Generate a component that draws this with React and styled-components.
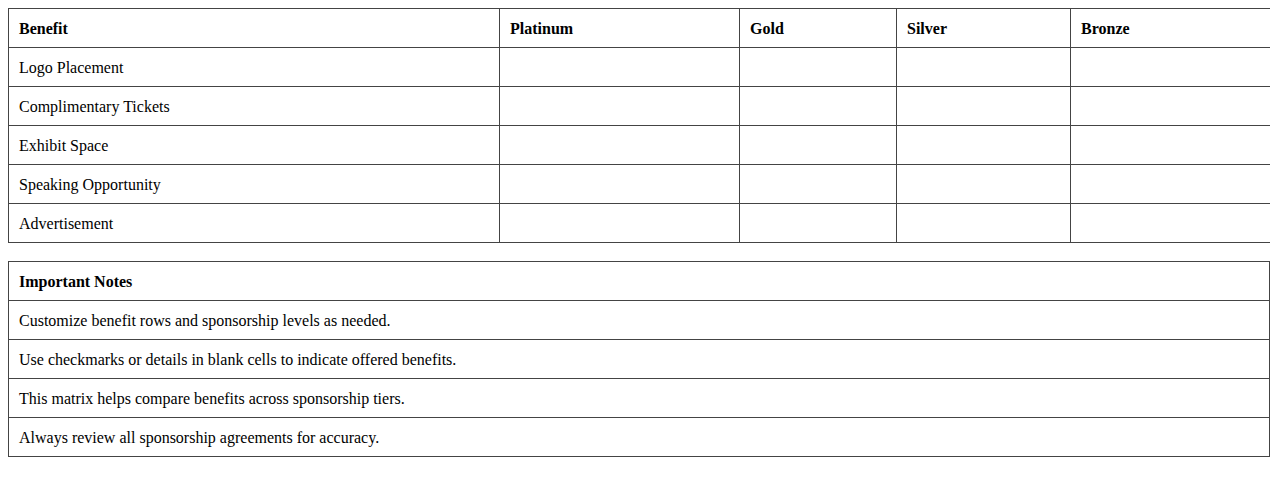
import React from 'react';
import styled, { createGlobalStyle } from 'styled-components';

const GlobalStyle = createGlobalStyle`
  body {
    margin: 8px;
    background: #fff;
    font-family: "Liberation Serif", "Times New Roman", serif;
    font-size: 16px;
    color: #000;
  }
`;

const Table = styled.table`
  width: 100%;
  border-collapse: collapse;
  table-layout: fixed;
  margin-bottom: ${(props) => props.gap || '0px'};
`;

const Th = styled.th`
  border: 1px solid #444;
  padding: 11px 10px 9px;
  line-height: 18px;
  text-align: left;
  font-weight: bold;
`;

const Td = styled.td`
  border: 1px solid #444;
  padding: 11px 10px 9px;
  line-height: 18px;
  height: 18px;
`;

const levels = ['Platinum', 'Gold', 'Silver', 'Bronze'];
const widths = [491, 240, 157, 174, 200];

const benefits = [
  'Logo Placement',
  'Complimentary Tickets',
  'Exhibit Space',
  'Speaking Opportunity',
  'Advertisement',
];

const notes = [
  'Customize benefit rows and sponsorship levels as needed.',
  'Use checkmarks or details in blank cells to indicate offered benefits.',
  'This matrix helps compare benefits across sponsorship tiers.',
  'Always review all sponsorship agreements for accuracy.',
];

const App = () => {
  return (
    <>
      <GlobalStyle />
      <Table gap='18px'>
        <colgroup>
          {widths.map((w, i) => (
            <col key={i} style={{ width: w }} />
          ))}
        </colgroup>
        <thead>
          <tr>
            <Th>Benefit</Th>
            {levels.map((l) => (
              <Th key={l}>{l}</Th>
            ))}
          </tr>
        </thead>
        <tbody>
          {benefits.map((b) => (
            <tr key={b}>
              <Td>{b}</Td>
              {levels.map((l) => (
                <Td key={l} />
              ))}
            </tr>
          ))}
        </tbody>
      </Table>
      <Table>
        <thead>
          <tr>
            <Th>Important Notes</Th>
          </tr>
        </thead>
        <tbody>
          {notes.map((n) => (
            <tr key={n}>
              <Td>{n}</Td>
            </tr>
          ))}
        </tbody>
      </Table>
    </>
  );
};

export default App;
